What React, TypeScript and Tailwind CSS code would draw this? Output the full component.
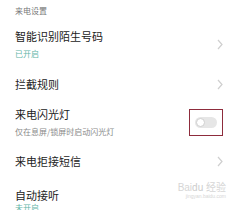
import React from "react";

function Chevron() {
  return (
    <svg width="6" height="11" viewBox="0 0 6 11" className="shrink-0">
      <path d="M1 1l4 4.5L1 10" fill="none" stroke="#cfcfcf" strokeWidth="1.2" />
    </svg>
  );
}

function Row({
  title,
  sub,
  subClass,
  right,
  className,
}: {
  title: string;
  sub?: string;
  subClass?: string;
  right?: React.ReactNode;
  className?: string;
}) {
  return (
    <div className={"flex items-center justify-between pl-[15px] pr-[17px] " + (className ?? "")}>
      <div className="flex flex-col">
        <div className="text-[11px] leading-[14px] text-[#222]">{title}</div>
        {sub && <div className={"text-[8px] leading-[10px] " + subClass}>{sub}</div>}
      </div>
      {right}
    </div>
  );
}

export default function App() {
  return (
    <div
      className="w-[240px] h-[210px] overflow-hidden bg-white"
      style={{ fontFamily: '"Noto Sans CJK SC", "Noto Sans", sans-serif' }}
    >
      <div className="pl-[15px] pt-[6px] text-[8px] leading-[10px] text-[#777]">来电设置</div>
      <Row
        className="mt-[13px]"
        title="智能识别陌生号码"
        sub="已开启"
        subClass="mt-[6px] text-[#5fb5a8]"
        right={<Chevron />}
      />
      <Row className="mt-[18px]" title="拦截规则" right={<Chevron />} />
      <Row
        className="mt-[16px] pr-[9px]"
        title="来电闪光灯"
        sub="仅在息屏/锁屏时启动闪光灯"
        subClass="mt-[6px] text-[#8a8a8a] text-[7.5px]"
        right={
          <div className="w-[34px] h-[27px] border-[1.5px] border-[#8e2c3c] flex items-center justify-center">
            <div className="w-[22px] h-[11px] rounded-full bg-[#e6e6e6] flex items-center pl-[1px]">
              <div className="w-[9px] h-[9px] rounded-full bg-white border border-[#cfcfcf]" />
            </div>
          </div>
        }
      />
      <Row className="mt-[17px]" title="来电拒接短信" right={<Chevron />} />
      <div className="relative">
        <Row
          className="mt-[20px]"
          title="自动接听"
          sub="未开启"
          subClass="mt-[1px] text-[#5fb5a8]"
        />
        <div
          className="absolute right-[14px] top-[-6px] text-[10px] leading-[11px] text-[#d6d6d6] text-right"
          style={{ fontFamily: '"Liberation Sans", "Noto Sans CJK SC", sans-serif' }}
        >
          <div>
            Bai<span className="text-[#cccccc]">du</span> 经验
          </div>
          <div className="text-[5px] leading-[7px]">jingyan.baidu.com</div>
        </div>
      </div>
    </div>
  );
}
